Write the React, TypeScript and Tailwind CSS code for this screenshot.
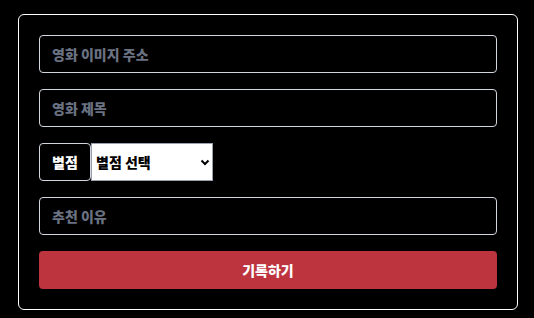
export default function App() {
  return (
    <div className="min-h-[318px] w-full bg-black pt-[14px] pl-[18px] font-['Noto_Sans_CJK_KR',sans-serif]">
      <form className="flex w-[500px] flex-col gap-4 rounded-md border border-white p-5">
        <input
          className="h-[38px] w-full rounded border border-gray-300 bg-black px-3 text-sm font-black text-white placeholder:text-gray-500 outline-none"
          placeholder="영화 이미지 주소"
        />
        <input
          className="h-[38px] w-full rounded border border-gray-300 bg-black px-3 text-sm font-black text-white placeholder:text-gray-500 outline-none"
          placeholder="영화 제목"
        />
        <div className="flex h-[38px]">
          <label className="flex w-[52px] items-center justify-center rounded border border-gray-300 text-sm font-black text-white">
            별점
          </label>
          <div className="relative w-[122px]">
            <select className="h-full w-full appearance-none border border-gray-400 bg-white pl-[4px] text-sm font-black text-black outline-none">
              <option>별점 선택</option>
              <option>⭐</option>
              <option>⭐⭐</option>
              <option>⭐⭐⭐</option>
              <option>⭐⭐⭐⭐</option>
              <option>⭐⭐⭐⭐⭐</option>
            </select>
            <svg
              className="pointer-events-none absolute top-1/2 right-[3px] -translate-y-1/2"
              width="10"
              height="10"
              viewBox="0 0 10 10"
              fill="none"
              stroke="black"
              strokeWidth="2"
            >
              <path d="M1.5 3.5 5 7l3.5-3.5" />
            </svg>
          </div>
        </div>
        <input
          className="h-[38px] w-full rounded border border-gray-300 bg-black px-3 text-sm font-black text-white placeholder:text-gray-500 outline-none"
          placeholder="추천 이유"
        />
        <button
          type="button"
          className="h-[38px] w-full rounded bg-[#bd343f] text-sm font-black text-white"
        >
          기록하기
        </button>
      </form>
    </div>
  )
}
